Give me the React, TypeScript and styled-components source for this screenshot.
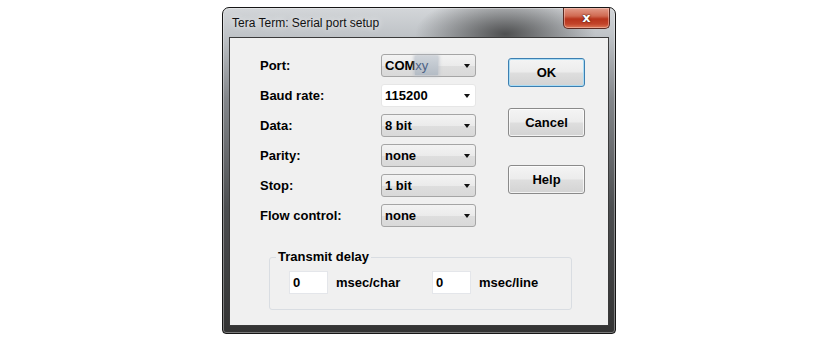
import React from "react";
import styled, { createGlobalStyle, css } from "styled-components";

const Global = createGlobalStyle`
  html, body { margin: 0; padding: 0; background: #ffffff; }
  body { font-family: "Liberation Sans", Arial, sans-serif; }
`;

const Page = styled.div`
  width: 840px;
  height: 343px;
  box-sizing: border-box;
  padding: 7px 0 0 222px;
  background: #ffffff;
`;

const Window = styled.div`
  width: 394px;
  height: 327px;
  box-sizing: border-box;
  border: 1px solid #161616;
  border-radius: 7px 7px 4px 4px;
  display: flex;
  flex-direction: column;
  background:
    radial-gradient(ellipse 90px 40px at 72% 8%, rgba(40, 40, 40, 0.75), rgba(40, 40, 40, 0) 100%),
    linear-gradient(180deg, #d3d6d9 0px, #bfc3c7 28px, #84878b 90px, #4c4e50 200px, #333333 100%);
  box-shadow: inset 0 0 0 1px rgba(255, 255, 255, 0.35);
  overflow: hidden;
`;

const TitleBar = styled.div`
  height: 29px;
  display: flex;
  align-items: flex-start;
  padding-left: 9px;
`;

const Title = styled.span`
  align-self: center;
  font-size: 12px;
  color: #111;
  margin-top: 1px;
  text-shadow: 0 0 6px rgba(255, 255, 255, 0.9);
`;

const CloseButton = styled.div`
  margin-left: auto;
  margin-right: 5px;
  width: 47px;
  height: 21px;
  box-sizing: border-box;
  border: 1px solid #5b2a22;
  border-top: none;
  border-radius: 0 0 5px 5px;
  background: linear-gradient(180deg, #e39c8a 0%, #d06a52 40%, #b8341c 55%, #c2442a 80%, #dc7a58 100%);
  box-shadow: inset 0 0 0 1px rgba(255, 220, 210, 0.45);
  display: flex;
  align-items: center;
  justify-content: center;
`;

const CloseGlyph = styled.span`
  color: #ffffff;
  font-family: "DejaVu Sans", sans-serif;
  font-weight: bold;
  font-size: 13px;
  line-height: 1;
  margin-top: -1px;
  text-shadow: 0 0 2px #4a1a10, 0 0 1px #4a1a10;
`;

const Client = styled.div`
  flex: 0 0 289px;
  margin: 0 6px;
  box-sizing: border-box;
  border: 1px solid #3a3a3a;
  background: #f0f0f0;
  display: flex;
  flex-direction: column;
`;

const TopArea = styled.div`
  display: flex;
  padding: 16px 0 0 30px;
`;

const Form = styled.div`
  display: grid;
  grid-template-columns: 121px 95px;
  grid-auto-rows: 23px;
  row-gap: 7px;
  align-items: center;
`;

const Label = styled.span`
  font-weight: bold;
  font-size: 13px;
  color: #000;
`;

const Combo = styled.div<{ $editable?: boolean }>`
  height: 23px;
  box-sizing: border-box;
  border-radius: 3px;
  display: flex;
  align-items: center;
  padding: 0 5px 0 3px;
  font-weight: bold;
  font-size: 13px;
  color: #000;
  ${(p) =>
    p.$editable
      ? css`
          background: #ffffff;
          border: 1px solid #e6e6e6;
        `
      : css`
          background: linear-gradient(180deg, #f3f3f3 0%, #ebebeb 50%, #dedede 51%, #d9d9d9 100%);
          border: 1px solid #a5a5a5;
        `}
`;

const Arrow = styled.span`
  margin-left: auto;
  width: 0;
  height: 0;
  border-left: 3.5px solid transparent;
  border-right: 3.5px solid transparent;
  border-top: 4px solid #111;
`;

const Blur = styled.span`
  font-weight: normal;
  color: #4d6286;
  padding: 2px 10px 2px 0;
  background: linear-gradient(180deg, #cfd4da 0%, #b4bcc5 100%);
  box-shadow: 0 0 3px 1px rgba(180, 188, 197, 0.8);
`;

const Buttons = styled.div`
  display: flex;
  flex-direction: column;
  margin-left: 32px;
  padding-top: 4px;
`;

const Button = styled.div<{ $default?: boolean; $gap?: number }>`
  width: 77px;
  height: 29px;
  box-sizing: border-box;
  margin-top: ${(p) => p.$gap ?? 0}px;
  border-radius: 3px;
  border: 1px solid ${(p) => (p.$default ? "#3c7fb1" : "#8a8a8a")};
  background: linear-gradient(180deg, #f4f4f4 0%, #ececec 48%, #dedede 52%, #d3d3d3 100%);
  box-shadow: ${(p) =>
    p.$default ? "inset 0 0 0 1px #a9dcf5" : "inset 0 0 0 1px rgba(255,255,255,0.7)"};
  display: flex;
  align-items: center;
  justify-content: center;
  font-weight: bold;
  font-size: 13px;
  color: #000;
`;

const Group = styled.fieldset`
  margin: 22px 0 0 39px;
  width: 303px;
  height: 61px;
  box-sizing: border-box;
  border: 1px solid #d9dde2;
  border-radius: 3px;
  padding: 6px 0 0 0;
  min-inline-size: 0;
`;

const Legend = styled.legend`
  margin-left: 6px;
  padding: 0 2px;
  font-weight: bold;
  font-size: 13px;
  line-height: 16px;
  color: #000;
`;

const DelayRow = styled.div`
  display: flex;
  align-items: center;
  padding-left: 19px;
`;

const Pair = styled.div<{ $width?: number }>`
  display: flex;
  align-items: center;
  width: ${(p) => (p.$width ? `${p.$width}px` : "auto")};
  flex: none;
`;

const Edit = styled.div`
  width: 39px;
  height: 23px;
  box-sizing: border-box;
  background: #ffffff;
  border: 1px solid #e4e6ea;
  display: flex;
  align-items: center;
  padding-left: 3px;
  font-weight: bold;
  font-size: 13px;
  color: #000;
`;

const Unit = styled.span`
  margin-left: 8px;
  font-weight: bold;
  font-size: 13px;
  color: #000;
`;

const rows: { label: string; value: React.ReactNode; editable?: boolean }[] = [
  { label: "Port:", value: <>COM<Blur>xy</Blur></> },
  { label: "Baud rate:", value: "115200", editable: true },
  { label: "Data:", value: "8 bit" },
  { label: "Parity:", value: "none" },
  { label: "Stop:", value: "1 bit" },
  { label: "Flow control:", value: "none" },
];

export default function App() {
  return (
    <>
      <Global />
      <Page>
        <Window>
          <TitleBar>
            <Title>Tera Term: Serial port setup</Title>
            <CloseButton>
              <CloseGlyph>x</CloseGlyph>
            </CloseButton>
          </TitleBar>
          <Client>
            <TopArea>
              <Form>
                {rows.map((r) => (
                  <React.Fragment key={r.label}>
                    <Label>{r.label}</Label>
                    <Combo $editable={r.editable}>
                      <span>{r.value}</span>
                      <Arrow />
                    </Combo>
                  </React.Fragment>
                ))}
              </Form>
              <Buttons>
                <Button $default>OK</Button>
                <Button $gap={21}>Cancel</Button>
                <Button $gap={28}>Help</Button>
              </Buttons>
            </TopArea>
            <Group>
              <Legend>Transmit delay</Legend>
              <DelayRow>
                <Pair $width={143}>
                  <Edit>0</Edit>
                  <Unit>msec/char</Unit>
                </Pair>
                <Pair>
                  <Edit>0</Edit>
                  <Unit>msec/line</Unit>
                </Pair>
              </DelayRow>
            </Group>
          </Client>
        </Window>
      </Page>
    </>
  );
}
